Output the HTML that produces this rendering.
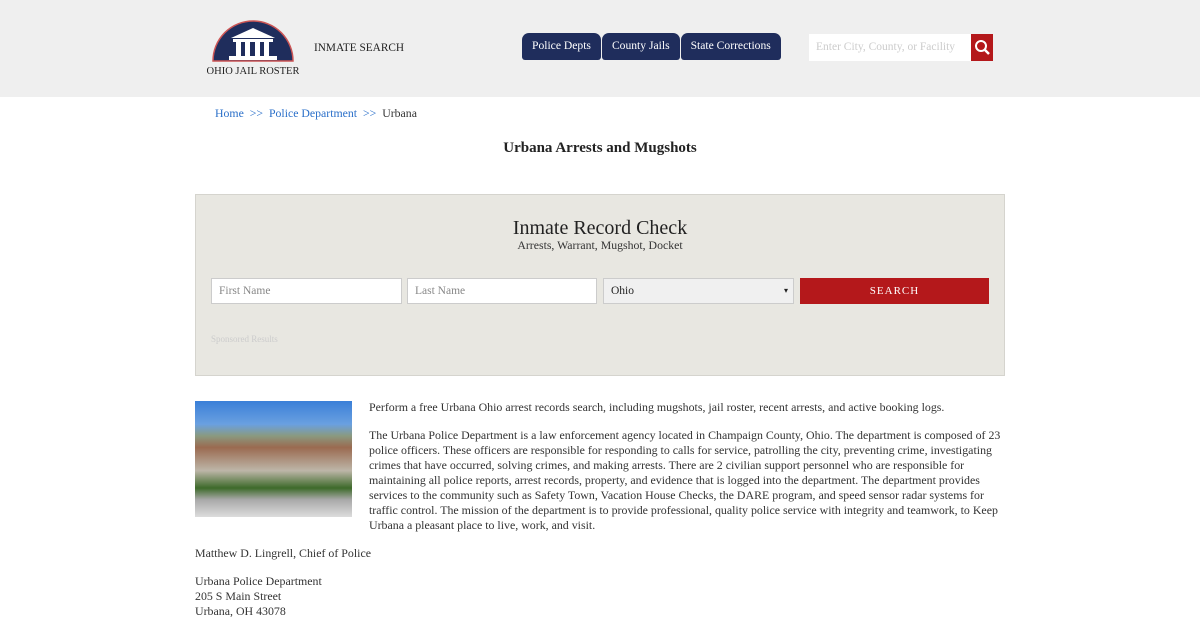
<!DOCTYPE html>
<html><head><meta charset="utf-8"><style>
*{box-sizing:border-box;margin:0;padding:0}
body{width:1200px;height:620px;overflow:hidden;background:#fff;font-family:"Liberation Serif","DejaVu Serif",serif;color:#333;font-size:11.8px}
.hdr{height:97px;background:#efefef;position:relative}
.logo{position:absolute;left:207px;top:20px}
.is{position:absolute;left:314px;top:42px;font-size:11.3px;color:#222}
.tabs{position:absolute;left:522px;top:33px;display:flex}
.tab{background:#1f2d5c;color:#fff;font-size:11.6px;height:27px;line-height:26px;padding:0 10px;border-radius:7px 7px 3px 3px;margin-right:1px}
.srch{position:absolute;left:809px;top:34px;width:162px;height:27px;background:#fff;color:#ccc;font-size:11.5px;line-height:27px;padding-left:7px}
.sb{position:absolute;left:971px;top:34px;width:22px;height:27px;background:#b4181b}
.bc{position:absolute;left:215px;top:106px;font-size:11.8px;color:#333}
.bc a{color:#2a6fc9;text-decoration:none}
h1{position:absolute;top:140px;width:1200px;text-align:center;font-size:15px;color:#222}
.box{position:absolute;left:195px;top:194px;width:810px;height:182px;background:#e8e7e1;border:1px solid #d5d4ce}
.box h2{font-weight:normal;text-align:center;font-size:20px;margin-top:22px;color:#222}
.box .sub{text-align:center;font-size:11.8px;color:#333;margin-top:-2px}
.in{position:absolute;top:83px;height:26px;background:#fff;border:1px solid #ccc;font-size:11.5px;color:#888;line-height:24px;padding-left:7px}
.btn{position:absolute;left:604px;top:83px;width:189px;height:26px;background:#b4181b;color:#fff;text-align:center;line-height:26px;font-size:11px;letter-spacing:1px}
.sp{position:absolute;left:15px;top:139px;font-size:9px;color:#ccc}
.content{position:absolute;left:195px;top:400px;width:810px;line-height:15px;font-size:11.9px}
.content p{margin-bottom:13px}
.img{float:left;width:157px;height:116px;margin:1px 17px 4px 0;background:linear-gradient(#3a7fd8 0,#6aa0e0 20%,#8a9a80 30%,#9a6a50 40%,#bdb6a8 60%,#3d6a2a 75%,#a8a8a8 85%,#ddd 100%)}
</style></head><body>
<div class="hdr">
<svg class="logo" width="92" height="58" viewBox="0 0 92 58">
<path d="M6 41 A40 40 0 0 1 86 41 Z" fill="#1f2d5c" stroke="#c55" stroke-width="1.5"/>
<polygon points="24,18 46,8 68,18" fill="#fff"/>
<rect x="26" y="19" width="40" height="3" fill="#fff"/>
<rect x="29" y="22" width="5" height="14" fill="#fff"/><rect x="38" y="22" width="5" height="14" fill="#fff"/><rect x="48" y="22" width="5" height="14" fill="#fff"/><rect x="57" y="22" width="5" height="14" fill="#fff"/>
<rect x="22" y="36" width="48" height="4" fill="#fff"/>
<text x="46" y="54" font-size="10.5" text-anchor="middle" fill="#222" font-family="Liberation Serif">OHIO JAIL ROSTER</text>
</svg>
<div class="is">INMATE SEARCH</div>
<div class="tabs"><div class="tab">Police Depts</div><div class="tab">County Jails</div><div class="tab">State Corrections</div></div>
<div class="srch">Enter City, County, or Facility</div>
<div class="sb"><svg width="22" height="27"><circle cx="10" cy="12" r="5" stroke="#fff" stroke-width="2" fill="none"/><line x1="14" y1="16" x2="18" y2="20" stroke="#fff" stroke-width="2.5"/></svg></div>
</div>
<div class="bc"><a>Home</a> &nbsp;<a>&gt;&gt;</a>&nbsp; <a>Police Department</a> &nbsp;<a>&gt;&gt;</a>&nbsp; Urbana</div>
<h1>Urbana Arrests and Mugshots</h1>
<div class="box">
<h2>Inmate Record Check</h2>
<div class="sub">Arrests, Warrant, Mugshot, Docket</div>
<div class="in" style="left:15px;width:191px">First Name</div>
<div class="in" style="left:211px;width:190px">Last Name</div>
<div class="in" style="left:407px;width:191px;background:#f0f0f0;color:#222">Ohio<span style="position:absolute;right:5px;font-size:8px">▾</span></div>
<div class="btn">SEARCH</div>
<div class="sp">Sponsored Results</div>
</div>
<div class="content">
<div class="img"></div>
<p>Perform a free Urbana Ohio arrest records search, including mugshots, jail roster, recent arrests, and active booking logs.</p>
<p>The Urbana Police Department is a law enforcement agency located in Champaign County, Ohio. The department is composed of 23 police officers. These officers are responsible for responding to calls for service, patrolling the city, preventing crime, investigating crimes that have occurred, solving crimes, and making arrests. There are 2 civilian support personnel who are responsible for maintaining all police reports, arrest records, property, and evidence that is logged into the department. The department provides services to the community such as Safety Town, Vacation House Checks, the DARE program, and speed sensor radar systems for traffic control. The mission of the department is to provide professional, quality police service with integrity and teamwork, to Keep Urbana a pleasant place to live, work, and visit.</p>
<p>Matthew D. Lingrell, Chief of Police</p>
<p>Urbana Police Department<br>205 S Main Street<br>Urbana, OH 43078</p>
</div>
</body></html>
